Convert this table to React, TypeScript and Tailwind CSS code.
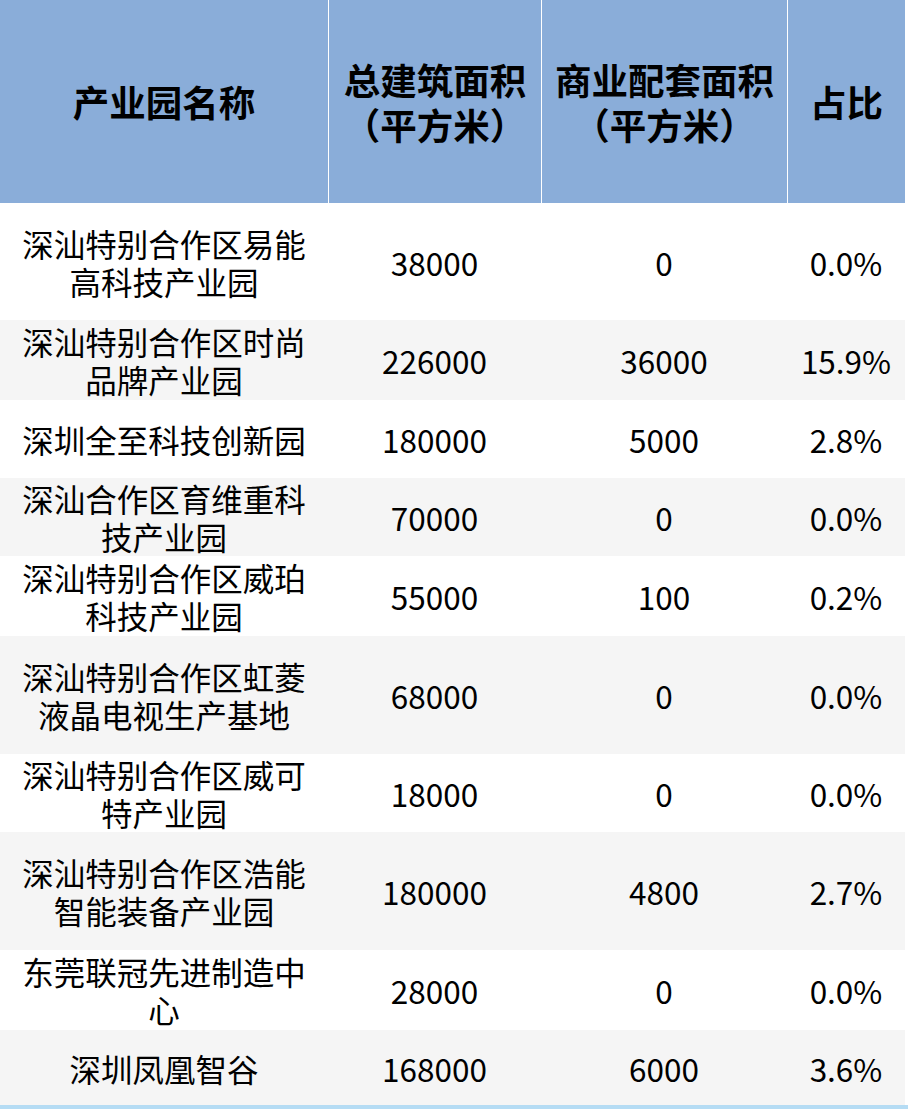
const rows = [
  { name: "深汕特别合作区易能高科技产业园", total: "38000", biz: "0", pct: "0.0%", h: "h-[117px]", bg: "bg-white" },
  { name: "深汕特别合作区时尚品牌产业园", total: "226000", biz: "36000", pct: "15.9%", h: "h-[80px]", bg: "bg-[#f5f5f5]" },
  { name: "深圳全至科技创新园", total: "180000", biz: "5000", pct: "2.8%", h: "h-[78px]", bg: "bg-white" },
  { name: "深汕合作区育维重科技产业园", total: "70000", biz: "0", pct: "0.0%", h: "h-[78px]", bg: "bg-[#f5f5f5]" },
  { name: "深汕特别合作区威珀科技产业园", total: "55000", biz: "100", pct: "0.2%", h: "h-[80px]", bg: "bg-white" },
  { name: "深汕特别合作区虹菱液晶电视生产基地", total: "68000", biz: "0", pct: "0.0%", h: "h-[118px]", bg: "bg-[#f5f5f5]" },
  { name: "深汕特别合作区威可特产业园", total: "18000", biz: "0", pct: "0.0%", h: "h-[78px]", bg: "bg-white" },
  { name: "深汕特别合作区浩能智能装备产业园", total: "180000", biz: "4800", pct: "2.7%", h: "h-[118px]", bg: "bg-[#f5f5f5]" },
  { name: "东莞联冠先进制造中心", total: "28000", biz: "0", pct: "0.0%", h: "h-[80px]", bg: "bg-white" },
  { name: "深圳凤凰智谷", total: "168000", biz: "6000", pct: "3.6%", h: "h-[75px]", bg: "bg-[#f5f5f5]" },
];

const cols = "grid grid-cols-[328px_213px_246px_118px]";

export default function App() {
  return (
    <div className="w-[908px] bg-white font-['Noto_Sans_CJK_SC',sans-serif] text-black">
      {/* Header */}
      <div className={`${cols} h-[203px] w-[905px] bg-[#8aadd9] text-[36.5px] font-bold leading-[45px]`}>
        <div className="flex items-center justify-center text-center">产业园名称</div>
        <div className="flex flex-col items-center justify-center border-l border-white text-center">
          <span>总建筑面积</span>
          <span>（平方米）</span>
        </div>
        <div className="flex flex-col items-center justify-center border-l border-white text-center">
          <span>商业配套面积</span>
          <span>（平方米）</span>
        </div>
        <div className="flex items-center justify-center border-l border-white text-center">占比</div>
      </div>

      {/* Body */}
      {rows.map((r) => (
        <div key={r.name} className={`${cols} ${r.h} ${r.bg} w-[905px] text-[31.5px] leading-[38px]`}>
          <div className="flex items-center justify-center px-2 text-center">{r.name}</div>
          <div className="flex items-center justify-center">{r.total}</div>
          <div className="flex items-center justify-center">{r.biz}</div>
          <div className="flex items-center justify-center">{r.pct}</div>
        </div>
      ))}

      <div className="h-[4px] w-[908px] bg-[#b5dcf4]" />
    </div>
  );
}
